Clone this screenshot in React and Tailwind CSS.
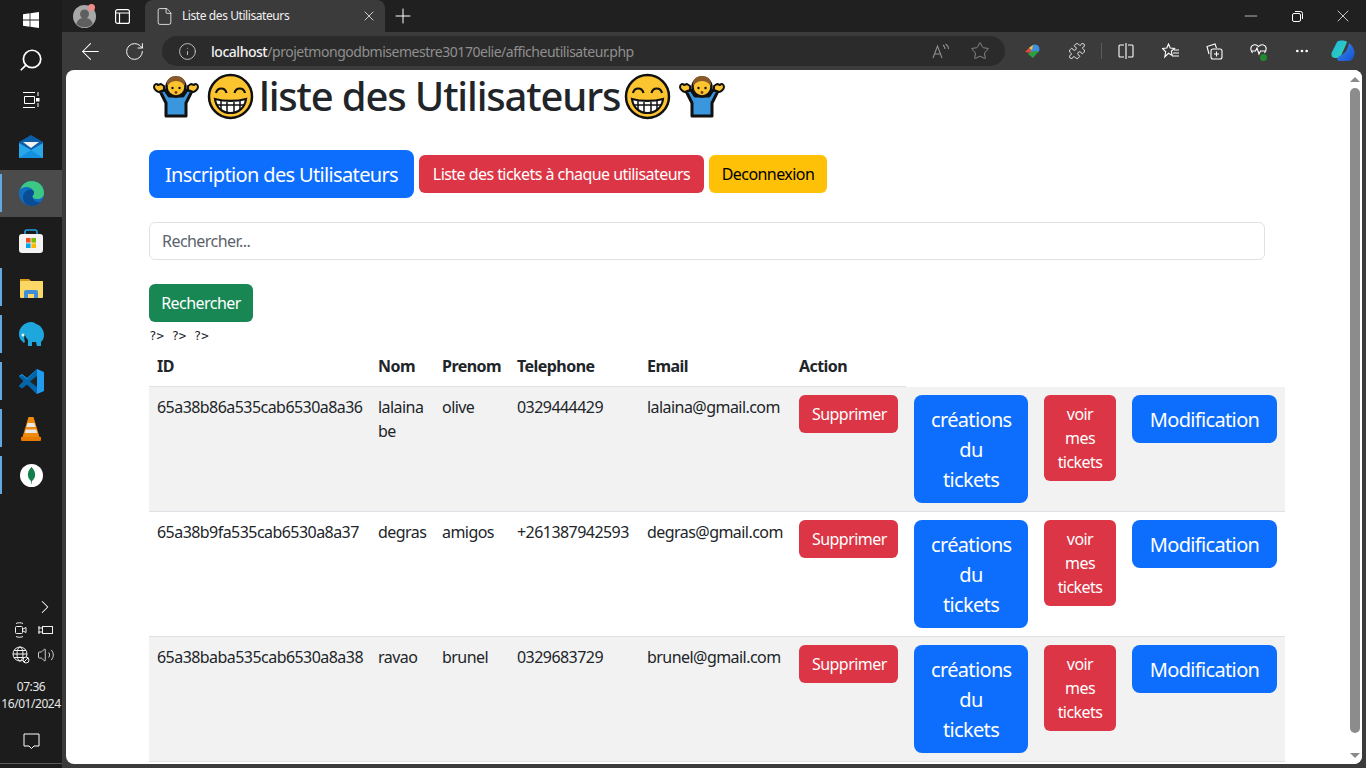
import React from "react";
import { ArrowLeft, ChevronRight, File, Info, Minus, MoreHorizontal, Plus, Puzzle, RotateCw, Search, Star, Volume2, X } from "lucide-react";

const users = [
  { id: "65a38b86a535cab6530a8a36", nom: "lalaina be", prenom: "olive", tel: "0329444429", email: "lalaina@gmail.com", striped: true },
  { id: "65a38b9fa535cab6530a8a37", nom: "degras", prenom: "amigos", tel: "+261387942593", email: "degras@gmail.com" },
  { id: "65a38baba535cab6530a8a38", nom: "ravao", prenom: "brunel", tel: "0329683729", email: "brunel@gmail.com", striped: true },
];

const WinLogo = () => (
  <svg width="16" height="16" viewBox="0 0 16 16" fill="#fff">
    <path d="M0 2.3 6.6 1.3v6.3H0zM7.4 1.2 16 0v7.6H7.4zM0 8.4h6.6v6.3L0 13.7zM7.4 8.4H16V16l-8.6-1.2z" />
  </svg>
);

const TaskView = () => (
  <svg width="17" height="16" viewBox="0 0 17 16" fill="none" stroke="#fff" strokeWidth="1">
    <path d="M0 .5h12M0 15.5h12M1.5 4.5h10v7h-10zM15 0v4M15 11v4" />
    <rect x="13" y="6" width="3.5" height="3.5" fill="#fff" stroke="none" />
  </svg>
);

const Mail = () => (
  <svg width="24" height="23" viewBox="0 0 24 23">
    <path d="M12 0 24 7v6L12 18 0 13V7z" fill="#0c5da8" />
    <path d="M4 7h16l-8 6z" fill="#f2f2f2" />
    <path d="M0 8 12 15 24 8v15H0z" fill="#28a8ea" />
    <path d="M0 23 12 15 24 23z" fill="#1490df" />
  </svg>
);

const Edge = () => (
  <svg width="25" height="25" viewBox="0 0 25 25">
    <circle cx="12.500" cy="12.500" r="12.500" fill="#0f6ec0" />
    <path d="M1 9C3 3 8 0 12.500 0 20 0 25 5 25 12c0 4-3 6-7 6-3 0-5-1-5-3 2-1 2-3 1-5C13 6 5 4 1 9z" fill="#3cc884" />
    <path d="M13.500 15c0 4 4 7 8 6-2 2.500-5.500 4-8.500 4-6 0-9-4-9-8.500 0-5 4-8 7-8 3 0 6 2 2.500 6.500z" fill="#0a4d96" />
  </svg>
);

const Store = () => (
  <svg width="24" height="24" viewBox="0 0 24 24">
    <path d="M6 6V3a2 2 0 0 1 2-2h8a2 2 0 0 1 2 2v3" fill="none" stroke="#1ba1e2" strokeWidth="1.600" />
    <rect y="5" width="24" height="19" rx="3" fill="#f3f3f3" />
    <rect x="7" y="9" width="4.600" height="4.600" fill="#f25022" />
    <rect x="12.400" y="9" width="4.600" height="4.600" fill="#7fba00" />
    <rect x="7" y="14.400" width="4.600" height="4.600" fill="#00a4ef" />
    <rect x="12.400" y="14.400" width="4.600" height="4.600" fill="#ffb900" />
  </svg>
);

const Folder = () => (
  <svg width="23" height="20" viewBox="0 0 23 20">
    <path d="M0 1h9l2 2h12v4H0z" fill="#d99a1c" />
    <rect y="3" width="23" height="17" rx="1" fill="#fbd766" />
    <path d="M4 20v-6a2 2 0 0 1 2-2h10a2 2 0 0 1 2 2v6h-4v-4H8v4z" fill="#3f8fd6" />
  </svg>
);

const Elephant = () => (
  <svg width="25" height="25" viewBox="0 0 25 25">
    <path d="M12 0c3 0 4 1 5 2 4 1 8 5 8 11 0 3-1 5-3 7v4h-4l-1-4h-4v4H9v-6c-2-2-3-4-3-6-1 2-1 5 0 8-1 1-2 1-2 0-3-2-4-5-4-8C0 5 6 0 12 0z" fill="#1ea7dd" />
    <circle cx="4" cy="13" r="1.500" fill="#e8f6fc" />
  </svg>
);

const VsCode = () => (
  <svg width="25" height="25" viewBox="0 0 25 25">
    <path d="M18 0 25 3v19l-7 3-10-10-5 4-3-2 5-5-5-5 3-2 5 4z" fill="#1f9cf0" />
    <path d="M18 0 8 10 3 6 0 8l5 4.500-5 5 3 2 5-4 10 9.500z" fill="#0065a9" />
    <path d="m18 7-7 5.500 7 5.500z" fill="#222" />
  </svg>
);

const Vlc = () => (
  <svg width="20" height="24" viewBox="0 0 20 24">
    <path d="M7.500 0h5l6 20H1.500z" fill="#f08a0c" />
    <path d="M6.600 6h6.800l1.200 4H5.400zM4.800 12.500h10.400l1 3.500H3.800z" fill="#e8e8e8" />
    <path d="M0 20h20v3a1 1 0 0 1-1 1H1a1 1 0 0 1-1-1z" fill="#e87a00" />
  </svg>
);

const Mongo = () => (
  <svg width="23" height="23" viewBox="0 0 23 23">
    <circle cx="11.500" cy="11.500" r="11.500" fill="#fff" />
    <path d="M11.500 3c3 3 4 6 3.500 9-.4 2.500-2 4-3 5l-.3 3h-.4l-.3-3c-1-1-2.600-2.500-3-5-.5-3 .5-6 3.500-9z" fill="#13804c" />
  </svg>
);

const Rail = ({ active, running, children }) => (
  <div className={`relative h-[47px] flex items-center justify-center ${active ? "bg-[#4b4b4b]" : ""}`}>
    {running && <span className="absolute left-0 top-[4px] h-[38px] w-[2px] bg-[#63a9e0]" />}
    {children}
  </div>
);

const Taskbar = () => (
  <aside className="w-[62px] h-[768px] shrink-0 bg-[#1c1c1c] flex flex-col text-white">
    <div className="h-[39px] flex items-center justify-center pt-[1px]"><WinLogo /></div>
    <div className="h-[41px] flex items-center justify-center"><Search size={26} strokeWidth={1.6} className="-scale-x-100" /></div>
    <div className="h-[40px] flex items-center justify-center"><TaskView /></div>
    <div className="mt-[3px]">
      <Rail><Mail /></Rail>
      <Rail active running><Edge /></Rail>
      <Rail><Store /></Rail>
      <Rail running><Folder /></Rail>
      <Rail running><Elephant /></Rail>
      <Rail running><VsCode /></Rail>
      <Rail running><Vlc /></Rail>
      <Rail running><Mongo /></Rail>
    </div>
    <div className="mt-auto flex flex-col">
      <div className="h-[15px] w-full flex items-center justify-end pr-[6px]"><ChevronRight size={22} strokeWidth={1.1} /></div>
      <div className="mt-[8px] pl-[14px] flex gap-[9px] items-center">
        <svg width="14" height="16" viewBox="0 0 14 16" fill="none" stroke="#f0f0f0"><rect x="1.500" y="4.500" width="7" height="7" rx="1" /><path d="m9 7 3-1.500v5L9 9M2 1.500c2-1 5-1 7 0M2 14.500c2 1 5 1 7 0" /></svg>
        <svg width="16" height="12" viewBox="0 0 16 12" fill="none" stroke="#f0f0f0"><rect x="5.500" y="2.500" width="10" height="7" /><path d="M1 4h4M1 8h4M2 2v8" /></svg>
      </div>
      <div className="mt-[8px] pl-[12px] flex gap-[7px] items-center">
        <svg width="18" height="18" viewBox="0 0 18 18" fill="none" stroke="#f0f0f0"><circle cx="8" cy="8" r="7" /><ellipse cx="8" cy="8" rx="3" ry="7" /><path d="M1 8h14M2 4.500h12M2 11.500h12" /><circle cx="14" cy="14" r="3" fill="#1c1c1c" /><path d="m12 16 4-4" /></svg>
        <Volume2 size={18} strokeWidth={1.1} color="#f0f0f0" />
      </div>
      <div className="mt-[14px] text-[12px] leading-[17px] text-center text-[#e8e8e8] whitespace-nowrap tracking-[-0.45px]">
        <div>07:36</div>
        <div>16/01/2024</div>
      </div>
      <div className="mt-[21px] h-[30px] flex items-start justify-center">
        <svg width="17" height="17" viewBox="0 0 17 17" fill="none" stroke="#fff"><path d="M1 1h15v12h-5l-2.500 2.500L6 13H1z" /></svg>
      </div>
    </div>
    <div className="h-px bg-[#5a5a5a]" />
    <div className="h-[4px]" />
  </aside>
);

const TabStrip = () => (
  <div className="h-[32px] bg-[#202020] flex items-end text-white">
    <div className="relative w-[83px] h-[32px] flex items-center pl-[11px]">
      <svg width="23" height="23" viewBox="0 0 23 23">
        <circle cx="11.500" cy="11.500" r="11.500" fill="#a8a8a8" />
        <circle cx="11.500" cy="9" r="4.500" fill="#5f5f5f" />
        <path d="M3.500 19c1-5 4-6 8-6s7 1 8 6a11.500 11.500 0 0 1-16 0z" fill="#5f5f5f" />
      </svg>
      <span className="absolute left-[26px] top-[4px] w-[7px] h-[7px] rounded-full bg-[#f08c8c]" />
      <svg className="absolute left-[53px] top-[9px]" width="15" height="15" viewBox="0 0 15 15" fill="none" stroke="#fff" strokeWidth="1.200"><rect x=".6" y=".6" width="13.800" height="13.800" rx="2" /><path d="M.6 4h13.800M4.500 4v10.400" /></svg>
    </div>
    <div className="w-[240px] h-[32px] bg-[#3b3b3b] rounded-t-[8px] flex items-center pl-[10px] pr-[8px] text-[12px]">
      <File size={19} strokeWidth={1} />
      <span className="ml-[8px] flex-1 text-[#f0f0f0] tracking-[-0.42px]">Liste des Utilisateurs</span>
      <X size={16} strokeWidth={1.1} />
    </div>
    <div className="w-[36px] h-[32px] flex items-center justify-center"><Plus size={24} strokeWidth={1} /></div>
    <div className="flex-1" />
    <div className="h-[32px] flex items-center">
      <div className="w-[46px] flex justify-center"><Minus size={20} strokeWidth={0.8} /></div>
      <div className="w-[46px] flex justify-center">
        <svg width="11" height="11" viewBox="0 0 11 11" fill="none" stroke="#fff"><rect x=".5" y="2.500" width="8" height="8" rx="1.500" /><path d="M3 .5h5.500a2 2 0 0 1 2 2V8" /></svg>
      </div>
      <div className="w-[46px] flex justify-center"><X size={20} strokeWidth={0.9} /></div>
    </div>
  </div>
);

const ToolSlot = ({ w, children }) => <div className={`${w} flex items-center justify-center`}>{children}</div>;

const Toolbar = () => (
  <div className="h-[38px] bg-[#3b3b3b] flex items-center text-white">
    <ToolSlot w="w-[56px]"><ArrowLeft size={27} strokeWidth={0.9} /></ToolSlot>
    <ToolSlot w="w-[32px]"><RotateCw size={21} strokeWidth={1.1} /></ToolSlot>
    <div className="ml-[12px] w-[843px] h-[30px] bg-[#2b2b2b] rounded-full flex items-center pl-[16px] pr-[15px]">
      <Info size={19} strokeWidth={1.1} color="#d0d0d0" />
      <div className="ml-[14px] flex-1 text-[14px] whitespace-nowrap tracking-[-0.47px]">
        <span className="text-[#f0f0f0] font-medium">localhost</span>
        <span className="text-[#8f8f8f]">/projetmongodbmisemestre30170elie/afficheutilisateur.php</span>
      </div>
      <svg width="17" height="16" viewBox="0 0 17 16" fill="none" stroke="#8f8f8f" strokeWidth="1.100"><path d="m1 15 4.500-12L10 15M2.500 11h6M11 2c1 1 2 2.500 2 4M13.500 1c1.500 1 3 3 3 5" /></svg>
      <Star className="ml-[21px]" size={20} strokeWidth={1.1} color="#8f8f8f" />
    </div>
    <ToolSlot w="w-[56px]">
      <svg width="16" height="14" viewBox="0 0 16 14"><path d="M0 8 6 2h4L6 9z" fill="#e5483a" /><circle cx="10" cy="5" r="4.500" fill="#3f8fe0" /><path d="M3 10c3-3 6-3 11-3L8 14z" fill="#2e9e3c" /><path d="M4 4 8 1 7 6z" fill="#e9c53a" /></svg>
    </ToolSlot>
    <ToolSlot w="w-[32px]"><Puzzle size={18} strokeWidth={1.1} /></ToolSlot>
    <div className="ml-[8px] w-px h-[16px] bg-[#5c5c5c]" />
    <ToolSlot w="w-[47px]">
      <svg width="16" height="16" viewBox="0 0 16 16" fill="none" stroke="#fff" strokeWidth="1.100"><path d="M6 2H2a1 1 0 0 0-1 1v10a1 1 0 0 0 1 1h4M10 2h4a1 1 0 0 1 1 1v10a1 1 0 0 1-1 1h-4M8 0v16" /></svg>
    </ToolSlot>
    <ToolSlot w="w-[42px]">
      <svg width="17" height="16" viewBox="0 0 17 16" fill="none" stroke="#fff" strokeWidth="1.100"><path d="m6.500 1 1.700 4 4.300.4-3.200 2.900.9 4.200-3.700-2.200L2.800 14l.9-5.200L.5 5.400 4.800 5zM12 7h5M11 10h6M10 13h7" /></svg>
    </ToolSlot>
    <ToolSlot w="w-[46px]">
      <svg width="17" height="17" viewBox="0 0 17 17" fill="none" stroke="#fff" strokeWidth="1.100"><path d="M3 11 1 3.500 9 1l1.500 4" /><rect x="5" y="6" width="11" height="10" rx="2" /><path d="M10.500 8.500v5M8 11h5" /></svg>
    </ToolSlot>
    <ToolSlot w="w-[42px]">
      <div className="relative w-[17px] h-[17px]">
        <svg width="17" height="16" viewBox="0 0 17 16" fill="none" stroke="#fff" strokeWidth="1.100"><path d="M2.500 10C1 8 .5 6.500 1 4.500 2 1.500 6 .5 8.500 3.500 11 .5 15 1.500 16 4.500c.5 2 0 3.500-1.500 5.500M1 8h4.500l1.500-3 2 6 1.500-3H16" /></svg>
        <span className="absolute left-[10px] top-[11px] w-[7px] h-[7px] rounded-full bg-[#1f8a2e]" />
      </div>
    </ToolSlot>
    <ToolSlot w="w-[46px]"><MoreHorizontal size={16} strokeWidth={2} /></ToolSlot>
    <ToolSlot w="w-[36px]">
      <svg width="24" height="22" viewBox="0 0 24 22">
        <defs>
          <linearGradient id="cp1" x1="0" y1="0" x2="1" y2="1"><stop offset="0" stopColor="#1fb6e8" /><stop offset="1" stopColor="#30d6a8" /></linearGradient>
          <linearGradient id="cp2" x1="0" y1="0" x2="1" y2="1"><stop offset="0" stopColor="#3a8cf0" /><stop offset="1" stopColor="#1450d0" /></linearGradient>
        </defs>
        <path d="M6 2c1-2 9-2 10 0l-2 5-5 11H4C0 18 0 14 1 12z" fill="url(#cp1)" />
        <path d="M18 3c4 3 7 9 5 13-1 3-3 5-6 5H8c-2 0-2-2-1-4l5-3c3-2 5-6 6-11z" fill="url(#cp2)" />
      </svg>
    </ToolSlot>
  </div>
);

const GrinEmoji = () => (
  <svg className="mx-[4px] shrink-0" width="47" height="47" viewBox="0 0 47 47">
    <circle cx="23.500" cy="23.500" r="21.500" fill="#fcc42f" stroke="#111" strokeWidth="2.500" />
    <path d="M9 20c1.500-6 9-6 10.500 0M27.500 20c1.500-6 9-6 10.500 0" fill="none" stroke="#111" strokeWidth="2.200" />
    <path d="M8 26c9 2.500 22 2.500 31 0-1 9-8 14-15.500 14S9 35 8 26z" fill="#fff" stroke="#111" strokeWidth="2.200" />
    <path d="M14 28v9M20 29v10M27 29v10M33 28v9M9 32h29" stroke="#111" strokeWidth="1.500" />
  </svg>
);

const ShrugEmoji = () => (
  <svg className="mx-[3px] shrink-0" width="48" height="46" viewBox="0 0 48 46">
    <path d="M8 18 13 17l4 6h14l4-6 5 1-6 12v13H14V30z" fill="#3a96dd" stroke="#111" strokeWidth="3" strokeLinejoin="round" />
    <circle cx="24" cy="14" r="9.500" fill="#fcc42f" stroke="#111" strokeWidth="2.500" />
    <path d="M15 13c-1-7 4-10 9-10s10 3 9 10c-3-4-6-5-9-5s-6 1-9 5z" fill="#8a5a2b" />
    <circle cx="20.500" cy="15" r="1.200" fill="#111" />
    <circle cx="27.500" cy="15" r="1.200" fill="#111" />
    <circle cx="24" cy="19.500" r="1.400" fill="#7a3b10" />
    <path d="M2 14c0-3 3-4 4-2l3-1 3 2v4l-5 2c-2 0-5-3-5-5zM46 14c0-3-3-4-4-2l-3-1-3 2v4l5 2c2 0 5-3 5-5z" fill="#fcc42f" stroke="#111" strokeWidth="2" strokeLinejoin="round" />
  </svg>
);

const btnBase = "border border-transparent text-white text-center align-middle";
const BtnSm = ({ color, className = "", children }) => (
  <button className={`${btnBase} ${color} ${className} px-[12px] py-[6px] text-[16px] leading-[24px] rounded-[6px]`}>{children}</button>
);
const BtnLg = ({ className = "", children }) => (
  <button className={`${btnBase} bg-[#0d6efd] ${className} px-[16px] pt-[9px] pb-[7px] text-[20px] leading-[30px] rounded-[8px] tracking-[-0.65px]`}>{children}</button>
);

const Cell = ({ children }) => <td className="p-[8px] align-top border-b border-[#dee2e6]">{children}</td>;

const Th = ({ w, children }) => (
  <th className={`${w} p-[8px] text-left font-bold border-b border-[#dee2e6] h-[41px]`}>{children}</th>
);

const UserRow = ({ user }) => (
  <tr className={user.striped ? "bg-[#f2f2f2]" : "bg-white"}>
    <Cell>{user.id}</Cell>
    <Cell>{user.nom}</Cell>
    <Cell>{user.prenom}</Cell>
    <Cell>{user.tel}</Cell>
    <Cell>{user.email}</Cell>
    <Cell><BtnSm color="bg-[#dc3545]" className="w-[99px]">Supprimer</BtnSm></Cell>
    <Cell><BtnLg className="w-[114px]">créations du tickets</BtnLg></Cell>
    <Cell><BtnSm color="bg-[#dc3545]" className="w-[72px]">voir mes tickets</BtnSm></Cell>
    <Cell><BtnLg className="w-[145px]">Modification</BtnLg></Cell>
  </tr>
);

const Scrollbar = () => (
  <div className="w-[14px] shrink-0 bg-white rounded-r-[8px] flex flex-col items-center">
    <div className="h-[18px] flex items-center justify-center">
      <span className="w-0 h-0 border-x-[5px] border-x-transparent border-b-[5px] border-b-[#8a8a8a]" />
    </div>
    <div className="w-[10px] h-[645px] rounded-full bg-[#8c8c8c]" />
    <div className="mt-auto h-[18px] flex items-center justify-center">
      <span className="w-0 h-0 border-x-[5px] border-x-transparent border-t-[5px] border-t-[#8a8a8a]" />
    </div>
  </div>
);

const Page = () => (
  <main className="h-[694px] mx-[4px] bg-white rounded-[8px] flex">
    <div className="flex-1 min-w-0 pl-[83px] text-[16px] leading-[24px] text-[#212529] tracking-[-0.55px]">
      <div className="w-[1116px]">
        <h1 className="h-[52px] flex items-center text-[40px] leading-[48px] font-medium whitespace-nowrap tracking-[-1.15px]">
          <ShrugEmoji /><GrinEmoji />
          <span className="ml-[1px]">liste des Utilisateurs</span>
          <GrinEmoji /><ShrugEmoji />
        </h1>
        <div className="mt-[28px] flex items-center gap-[5px]">
          <BtnLg className="w-[265px] !px-0 whitespace-nowrap">Inscription des Utilisateurs</BtnLg>
          <BtnSm color="bg-[#dc3545]" className="w-[285px] !px-0 whitespace-nowrap">Liste des tickets à chaque utilisateurs</BtnSm>
          <button className="border border-transparent bg-[#ffc107] text-black w-[118px] py-[6px] text-[16px] leading-[24px] rounded-[6px]">Deconnexion</button>
        </div>
        <div className="mt-[24px] h-[38px] border border-[#dee2e6] rounded-[6px] px-[12px] flex items-center text-[#5c636a]">Rechercher...</div>
        <div className="mt-[24px]"><BtnSm color="bg-[#198754]" className="w-[104px] !px-0">Rechercher</BtnSm></div>
        <div className="h-[24px] font-['DejaVu_Sans_Mono',monospace] text-[12.4px] leading-[27px] tracking-normal">?&gt; ?&gt; ?&gt;</div>
        <table className="w-[1136px] table-fixed border-separate border-spacing-0">
          <thead>
            <tr>
              <Th w="w-[221px]">ID</Th>
              <Th w="w-[64px]">Nom</Th>
              <Th w="w-[75px]">Prenom</Th>
              <Th w="w-[130px]">Telephone</Th>
              <Th w="w-[152px]">Email</Th>
              <Th w="w-[115px]">Action</Th>
              <th className="w-[130px]" />
              <th className="w-[88px]" />
              <th className="w-[161px]" />
            </tr>
          </thead>
          <tbody>
            {users.map((u) => <UserRow key={u.id} user={u} />)}
          </tbody>
        </table>
      </div>
    </div>
    <Scrollbar />
  </main>
);

export default function App() {
  return (
    <div className="w-[1366px] h-[768px] overflow-hidden flex bg-[#3b3b3b] font-['Noto_Sans',sans-serif]">
      <Taskbar />
      <div className="flex-1 min-w-0 flex flex-col">
        <TabStrip />
        <Toolbar />
        <Page />
      </div>
    </div>
  );
}
